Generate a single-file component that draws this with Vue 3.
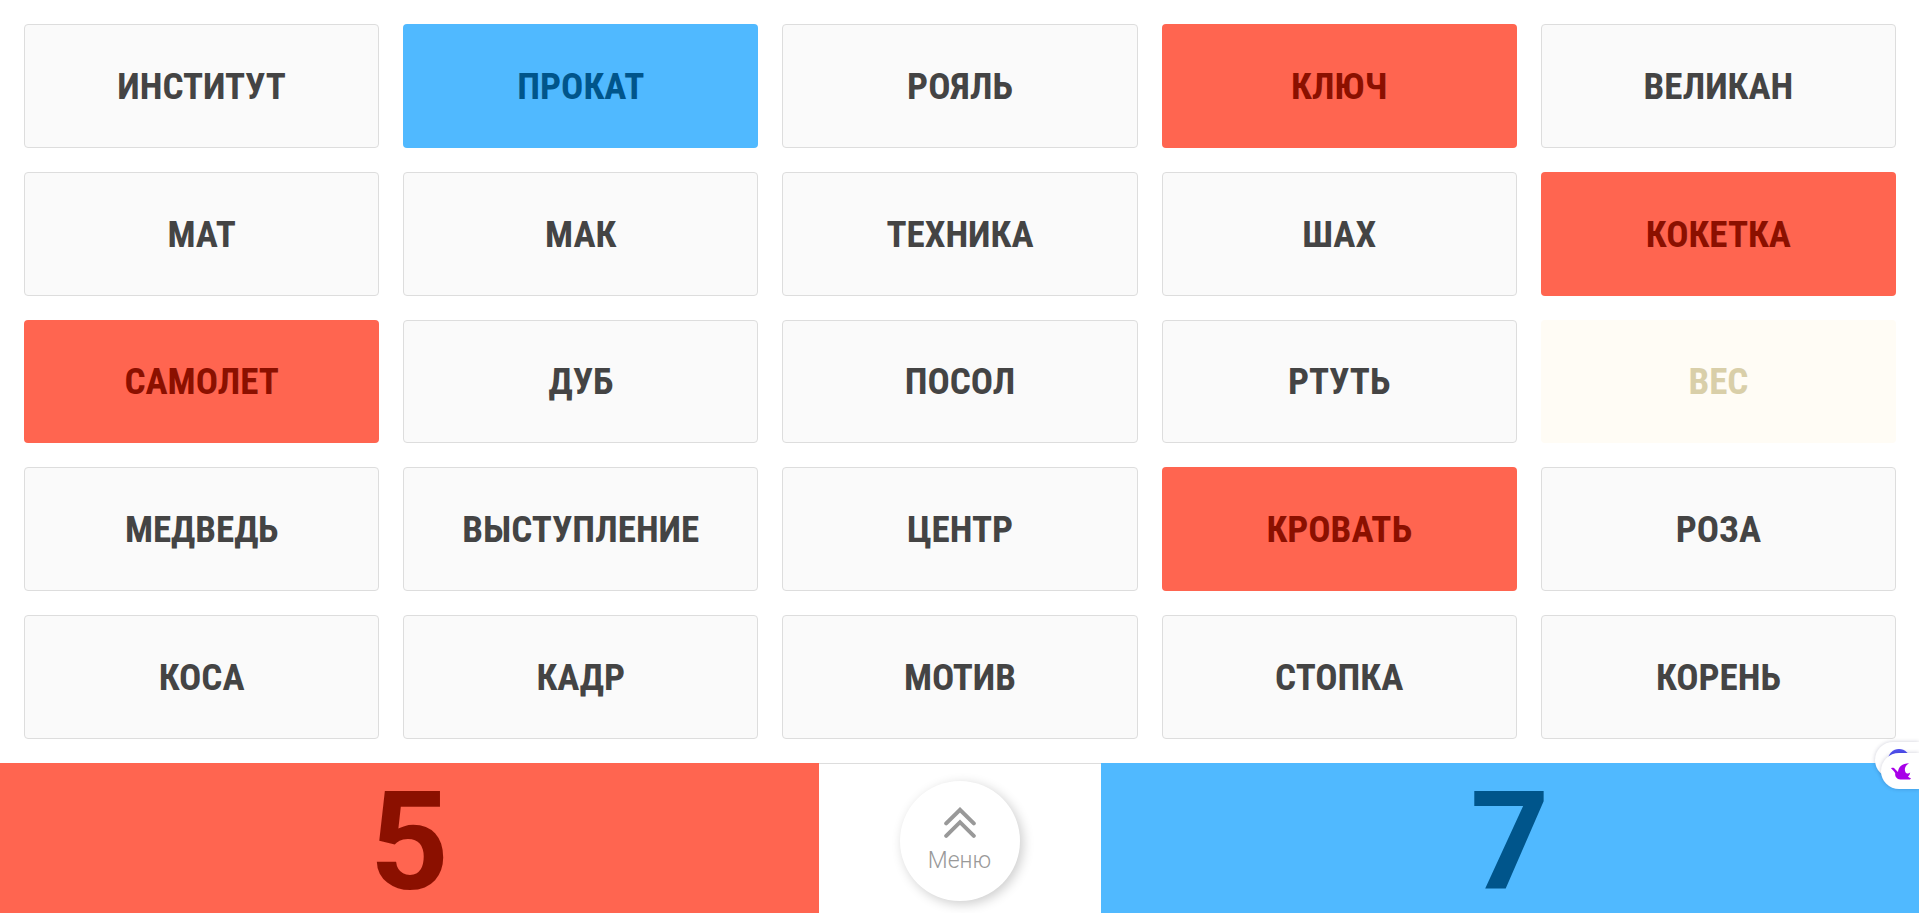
<script setup>
const cards = [
  ['ИНСТИТУТ', 'open'], ['ПРОКАТ', 'blue'], ['РОЯЛЬ', 'open'], ['КЛЮЧ', 'red'], ['ВЕЛИКАН', 'open'],
  ['МАТ', 'open'], ['МАК', 'open'], ['ТЕХНИКА', 'open'], ['ШАХ', 'open'], ['КОКЕТКА', 'red'],
  ['САМОЛЕТ', 'red'], ['ДУБ', 'open'], ['ПОСОЛ', 'open'], ['РТУТЬ', 'open'], ['ВЕС', 'neutral'],
  ['МЕДВЕДЬ', 'open'], ['ВЫСТУПЛЕНИЕ', 'open'], ['ЦЕНТР', 'open'], ['КРОВАТЬ', 'red'], ['РОЗА', 'open'],
  ['КОСА', 'open'], ['КАДР', 'open'], ['МОТИВ', 'open'], ['СТОПКА', 'open'], ['КОРЕНЬ', 'open']
].map(([word, team]) => ({ word, team }))
</script>

<template>
  <div class="game">
    <main class="board">
      <button v-for="card in cards" :key="card.word" type="button" class="card" :class="card.team">{{ card.word }}</button>
    </main>
    <footer class="bar">
      <div class="score red">5</div>
      <div class="center">
        <button type="button" class="menu">
          <svg class="chevrons" viewBox="0 0 32 32" aria-hidden="true">
            <path d="M2.2 16.4 16 2.8l13.8 13.6M2.2 28.8 16 15.2l13.8 13.6" />
          </svg>
          <span>Меню</span>
        </button>
      </div>
      <div class="score blue">7</div>
    </footer>
    <div class="dock">
      <button type="button" class="tab back" aria-label="Assistant">
        <svg viewBox="0 0 22 22" aria-hidden="true"><circle cx="11" cy="11" r="11" fill="#5050f0" /></svg>
      </button>
      <button type="button" class="tab front" aria-label="Bird">
        <svg viewBox="0 0 20 17" aria-hidden="true">
          <path d="M0 5.2C1.8 4.3 3.4 4.8 4.4 6.4L7 9C7.4 4 11 .4 18.2 .3C14.6 2.2 13.2 5.4 14.2 8.4C14.8 10.6 17.4 11.2 19.2 9.4C18.8 11.4 18.2 12.6 17 13.4C18 14.6 19 15 20 15.2L19 16.5H9.4C5.8 16.3 3.8 13.6 4.2 10.2C3.6 8.4 1.6 7 0 5.2Z" fill="#a800e8" />
        </svg>
      </button>
    </div>
  </div>
</template>

<style>
body {
  margin: 0;
  background: #fff;
}
</style>

<style scoped>
.game {
  display: flex;
  flex-direction: column;
  height: 100vh;
  overflow: hidden;
  font-family: Roboto, "Liberation Sans", sans-serif;
}
.board {
  flex: 1;
  display: grid;
  grid-template-columns: repeat(5, minmax(0, 1fr));
  grid-auto-rows: minmax(0, 1fr);
  gap: 24px;
  padding: 24px 23px 24px 24px;
}
.card {
  border: 1px solid transparent;
  border-radius: 4px;
  padding: 2px 0 0;
  font: 700 37px/42px "Roboto Condensed", "Liberation Sans Narrow", Roboto, sans-serif;
  cursor: pointer;
}
.card.open {
  background: #fafafa;
  border-color: #ddd;
  color: #444;
}
.red {
  background: #ff6550;
  color: #8b1000;
}
.blue {
  background: #50b9ff;
  color: #00558b;
}
.card.neutral {
  background: #fffcf5;
  color: #d9cfa9;
}
.bar {
  display: flex;
  height: 150px;
}
.score {
  flex: 1;
  text-align: center;
  font-size: 138px;
  font-weight: 700;
  line-height: 158px;
}
.center {
  width: 282px;
  box-sizing: border-box;
  border-top: 1px solid #ddd;
  padding-top: 17px;
  display: flex;
  justify-content: center;
  align-items: flex-start;
}
.menu {
  width: 120px;
  height: 120px;
  box-sizing: border-box;
  border: 0;
  border-radius: 50%;
  background: #fff;
  box-shadow: 3px 3px 12px rgba(0, 0, 0, 0.2);
  padding: 0;
  display: flex;
  flex-direction: column;
  align-items: center;
  justify-content: center;
  gap: 8px;
  color: #999;
  font: 300 23px/28px Roboto, sans-serif;
  cursor: pointer;
}
.chevrons {
  width: 32px;
  height: 32px;
  fill: none;
  stroke: #999;
  stroke-width: 4;
  stroke-linecap: round;
}
.dock {
  position: absolute;
  right: 0;
  top: 742px;
  width: 44px;
  height: 48px;
}
.tab {
  position: absolute;
  right: 0;
  box-sizing: border-box;
  border: 0;
  border-radius: 18px 0 0 18px;
  background: #fff;
  padding: 0;
  height: 36px;
  box-shadow: 0 0 4px rgba(0, 0, 60, 0.2);
}
.back {
  top: 0;
  width: 44px;
}
.back svg {
  display: block;
  width: 22px;
  margin: 0 0 0 13px;
}
.front {
  top: 11px;
  width: 38px;
}
.front svg {
  display: block;
  width: 20px;
  margin: 0 0 0 10px;
}
</style>
